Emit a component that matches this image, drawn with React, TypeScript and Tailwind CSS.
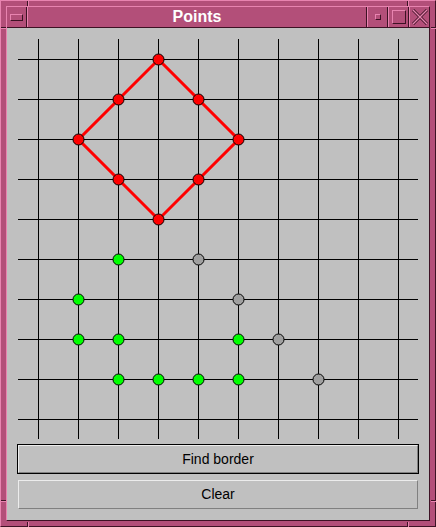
import React from 'react'

const LIGHT = '#e884b0'
const DARK = '#3d1224'

const red: [number, number][] = [
  [3, 0], [2, 1], [4, 1], [1, 2], [5, 2], [2, 3], [4, 3], [3, 4],
]
const green: [number, number][] = [
  [2, 5], [1, 6], [1, 7], [2, 7], [5, 7], [2, 8], [3, 8], [4, 8], [5, 8],
]
const gray: [number, number][] = [
  [4, 5], [5, 6], [6, 7], [7, 8],
]
// found border: diamond around the red points
const diamond: [number, number][] = [[3, 0], [5, 2], [3, 4], [1, 2]]

const px = (c: number) => 20 + 40 * c

function Canvas() {
  return (
    <svg width={400} height={400} className="block">
      {Array.from({ length: 10 }).map((_, i) => (
        <g key={i} shapeRendering="crispEdges">
          <line x1={px(i) + 0.5} y1={0} x2={px(i) + 0.5} y2={400} stroke="#000" strokeWidth={1} />
          <line x1={0} y1={px(i) + 0.5} x2={400} y2={px(i) + 0.5} stroke="#000" strokeWidth={1} />
        </g>
      ))}
      <polygon
        points={diamond.map(([c, r]) => `${px(c) + 0.5},${px(r) + 0.5}`).join(' ')}
        fill="none"
        stroke="#ff0000"
        strokeWidth={3}
      />
      {red.map(([c, r], i) => (
        <circle key={'r' + i} cx={px(c) + 0.5} cy={px(r) + 0.5} r={5.5} fill="#ff0000" stroke="#000" strokeWidth={1} />
      ))}
      {green.map(([c, r], i) => (
        <circle key={'g' + i} cx={px(c) + 0.5} cy={px(r) + 0.5} r={5.5} fill="#00ff00" stroke="#000" strokeWidth={1} />
      ))}
      {gray.map(([c, r], i) => (
        <circle key={'k' + i} cx={px(c) + 0.5} cy={px(r) + 0.5} r={5.5} fill="#a0a0a0" stroke="#000" strokeWidth={1} />
      ))}
    </svg>
  )
}

// resize-handle notches drawn on the window frame
function FrameNotches() {
  const marks: [number, number, number, number, string][] = [
    [26, 0, 1, 6, DARK], [27, 0, 1, 6, LIGHT],
    [406, 0, 1, 6, DARK], [407, 0, 1, 6, LIGHT],
    [26, 521, 1, 6, DARK], [27, 521, 1, 6, LIGHT],
    [406, 521, 1, 6, DARK], [407, 521, 1, 6, LIGHT],
    [0, 26, 6, 1, DARK], [0, 27, 6, 1, LIGHT],
    [430, 26, 6, 1, DARK], [430, 27, 6, 1, LIGHT],
    [0, 499, 6, 1, DARK], [0, 500, 6, 1, LIGHT],
    [430, 499, 6, 1, DARK], [430, 500, 6, 1, LIGHT],
  ]
  return (
    <svg width={436} height={527} className="absolute inset-0 pointer-events-none" shapeRendering="crispEdges">
      {marks.map(([x, y, w, h, c], i) => (
        <rect key={i} x={x} y={y} width={w} height={h} fill={c} />
      ))}
    </svg>
  )
}

function TitleButton({ children }: { children: React.ReactNode }) {
  return (
    <div className="w-[21px] h-full flex items-center justify-center border-l border-l-[#e884b0] border-r border-r-[#3d1224]">
      {children}
    </div>
  )
}

export default function App() {
  return (
    <div
      className="relative w-[436px] h-[527px] bg-[#b34f79] border border-t-[#e884b0] border-l-[#e884b0] border-r-[#3d1224] border-b-[#3d1224] p-[5px] flex"
      style={{ fontFamily: '"Liberation Sans", Arial, sans-serif' }}
    >
      <FrameNotches />

      <div className="relative flex-1 flex flex-col border border-t-[#e884b0] border-l-[#e884b0] border-r-[#3d1224] border-b-[#3d1224]">
        {/* Title bar */}
        <div className="h-[21px] flex items-stretch border-b border-b-[#3d1224] shrink-0">
          <div className="w-[20px] flex items-center justify-center border-r border-r-[#3d1224]">
            <div className="w-[13px] h-[7px] border border-t-[#e884b0] border-l-[#e884b0] border-r-[#3d1224] border-b-[#3d1224]" />
          </div>
          <div className="flex-1 flex items-center justify-center border-l border-l-[#e884b0] border-r border-r-[#3d1224] text-white font-bold text-[16px] leading-none">
            Points
          </div>
          <TitleButton>
            <div className="w-[6px] h-[6px] border border-t-[#e884b0] border-l-[#e884b0] border-r-[#3d1224] border-b-[#3d1224]" />
          </TitleButton>
          <TitleButton>
            <div className="w-[14px] h-[14px] border border-t-[#e884b0] border-l-[#e884b0] border-r-[#3d1224] border-b-[#3d1224]" />
          </TitleButton>
          <div className="w-[20px] h-full flex items-center justify-center border-l border-l-[#e884b0]">
            <svg width={16} height={16} viewBox="0 0 16 16">
              <path d="M1 1 L15 15 M15 1 L1 15" stroke={DARK} strokeWidth={3} />
              <path d="M1 1 L15 15 M15 1 L1 15" stroke={LIGHT} strokeWidth={1.4} />
            </svg>
          </div>
        </div>

        {/* Content */}
        <div className="flex-1 bg-[#c0c0c0] px-[10px] pt-[11px] pb-[11px] flex flex-col">
          <div className="mx-[1px]">
            <Canvas />
          </div>
          <div className="mt-[5px] h-[30px] border border-black">
            <div className="h-full flex items-center justify-center border border-t-[#ececec] border-l-[#ececec] border-r-[#808080] border-b-[#808080] text-[14px] text-black">
              Find border
            </div>
          </div>
          <div className="mt-[6px] mx-[1px] h-[29px] flex items-center justify-center border border-t-[#ececec] border-l-[#ececec] border-r-[#808080] border-b-[#808080] text-[14px] text-black">
            Clear
          </div>
        </div>
      </div>
    </div>
  )
}
